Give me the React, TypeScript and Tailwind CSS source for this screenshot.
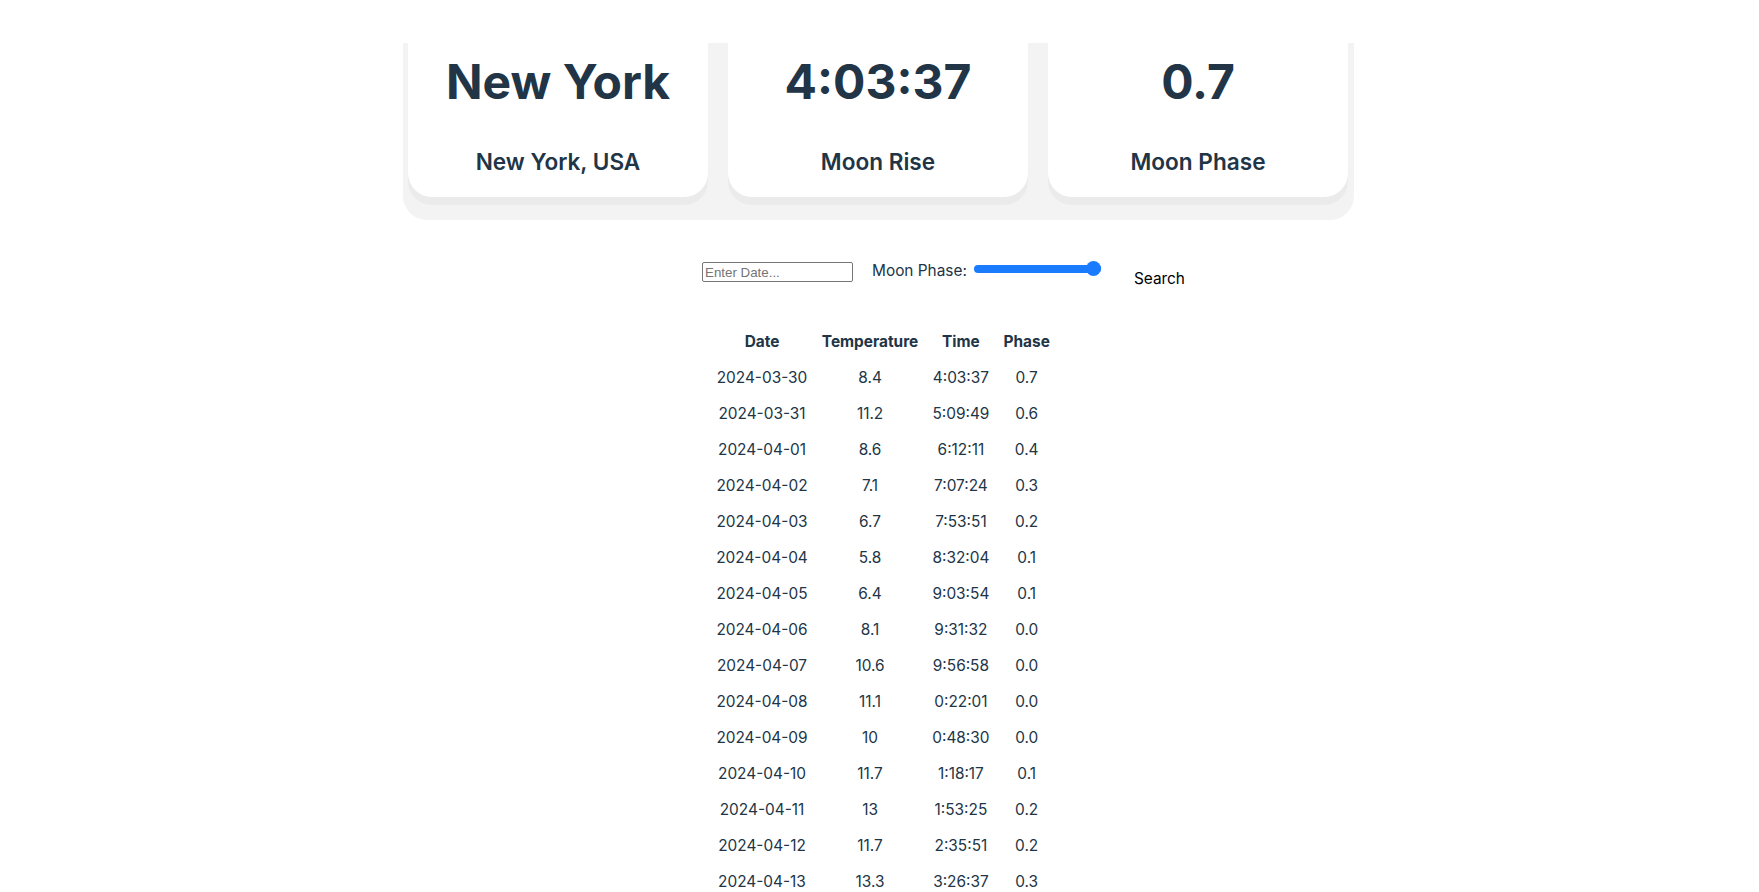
import React from 'react';

const cards = [
  { value: 'New York', label: 'New York, USA' },
  { value: '4:03:37', label: 'Moon Rise' },
  { value: '0.7', label: 'Moon Phase' },
];

const rows = [
  ['2024-03-30', '8.4', '4:03:37', '0.7'],
  ['2024-03-31', '11.2', '5:09:49', '0.6'],
  ['2024-04-01', '8.6', '6:12:11', '0.4'],
  ['2024-04-02', '7.1', '7:07:24', '0.3'],
  ['2024-04-03', '6.7', '7:53:51', '0.2'],
  ['2024-04-04', '5.8', '8:32:04', '0.1'],
  ['2024-04-05', '6.4', '9:03:54', '0.1'],
  ['2024-04-06', '8.1', '9:31:32', '0.0'],
  ['2024-04-07', '10.6', '9:56:58', '0.0'],
  ['2024-04-08', '11.1', '0:22:01', '0.0'],
  ['2024-04-09', '10', '0:48:30', '0.0'],
  ['2024-04-10', '11.7', '1:18:17', '0.1'],
  ['2024-04-11', '13', '1:53:25', '0.2'],
  ['2024-04-12', '11.7', '2:35:51', '0.2'],
  ['2024-04-13', '13.3', '3:26:37', '0.3'],
  ['2024-04-14', '12.9', '4:25:40', '0.4'],
];

export default function App() {
  return (
    <div className="min-h-screen bg-white text-[#213547] font-['Inter',system-ui,sans-serif] overflow-hidden">
      {/* stat cards */}
      <div className="mx-auto w-fit mt-[43px] flex flex-col bg-[#f3f3f3] rounded-b-[24px] pl-[5px] pr-[6px] pb-[23px] -translate-x-[1px]">
        <div className="flex gap-5 -mt-[43px]">
          {cards.map((c) => (
            <div
              key={c.label}
              className="w-[300px] bg-white rounded-b-[24px] shadow-[0_8px_0_0_#ebebeb] pt-[58px] pb-[19px] flex flex-col items-center"
            >
              <div className="text-5xl font-bold leading-[48px]">{c.value}</div>
              <div className="mt-[40px] text-[22.6px] font-semibold leading-8">{c.label}</div>
            </div>
          ))}
        </div>
      </div>

      {/* search controls */}
      <div className="flex items-start pl-[702px] mt-[35px]">
        <input
          type="text"
          placeholder="Enter Date..."
          className="mt-[7px] w-[151px] h-[20px] border border-[#767676] rounded-[2px] px-[2px] text-[13.33px] font-['Liberation_Sans',Arial,sans-serif] text-black placeholder:text-[#757575] outline-none"
        />
        <label className="ml-[19px] mt-[4px] text-[15.4px] leading-6">Moon Phase:</label>
        <div className="ml-[7px] mt-[6px] w-[127px] h-[16px] flex items-center relative">
          <div className="w-full h-[8px] rounded-full bg-[#1a7bff]" />
          <div className="absolute right-0 top-0 w-[15px] h-[15px] rounded-full bg-[#1a7bff]" />
        </div>
        <button className="ml-[13px] mt-[1px] px-[19px] py-[9.6px] rounded-lg border border-transparent bg-white text-black text-[15.4px] leading-6 font-normal">
          Search
        </button>
      </div>

      {/* data table */}
      <div className="flex justify-center pl-[7px] mt-[23px]">
        <table className="border-collapse text-[15.4px] leading-6">
          <thead>
            <tr>
              {['Date', 'Temperature', 'Time', 'Phase'].map((h) => (
                <th key={h} className="px-[7px] py-[6px] font-bold">
                  {h}
                </th>
              ))}
            </tr>
          </thead>
          <tbody>
            {rows.map((r) => (
              <tr key={r[0]}>
                {r.map((v, i) => (
                  <td key={i} className="px-[7px] py-[6px] text-center">
                    {v}
                  </td>
                ))}
              </tr>
            ))}
          </tbody>
        </table>
      </div>
    </div>
  );
}
